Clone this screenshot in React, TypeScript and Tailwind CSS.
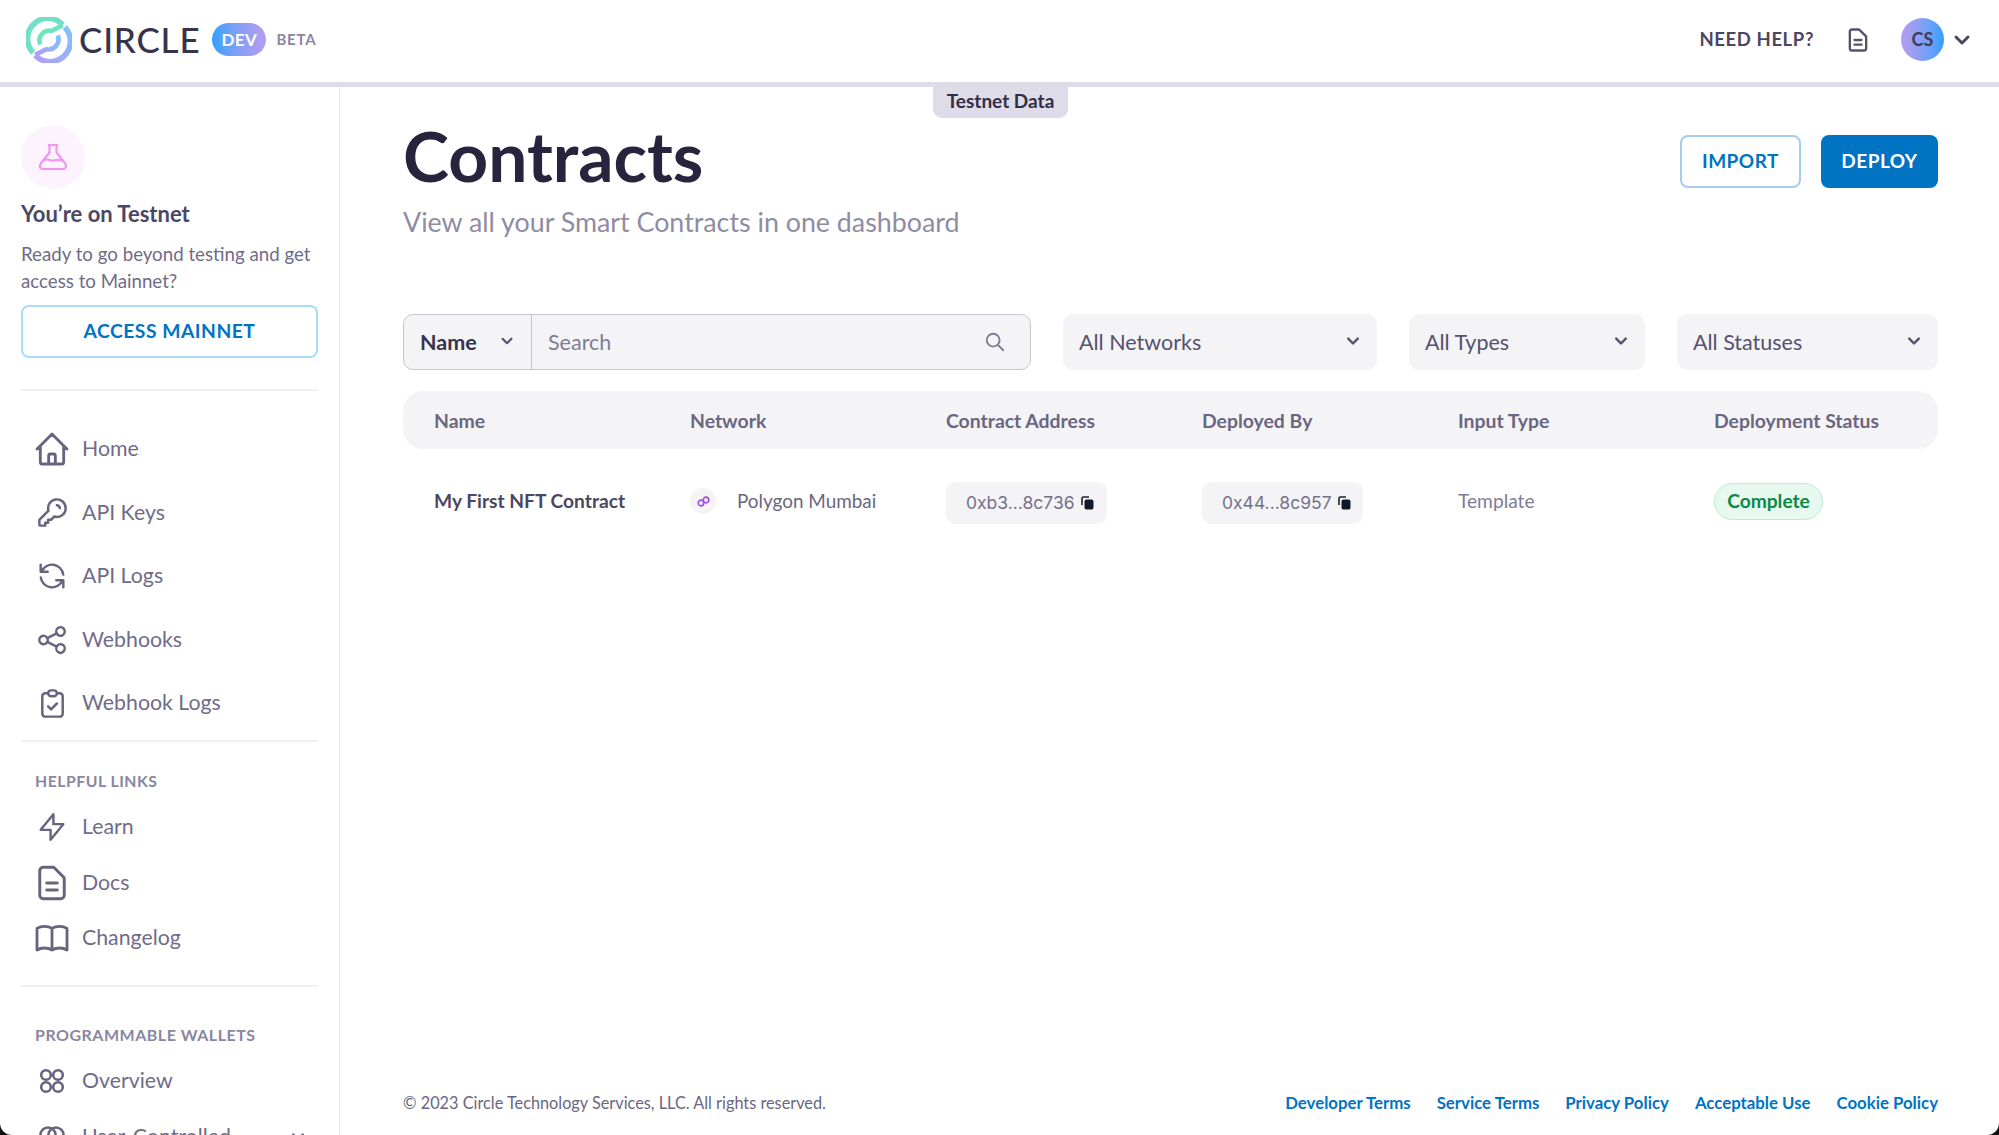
import React from "react";
import {
  HiOutlineHome, HiOutlineKey, HiOutlineRefresh, HiOutlineShare, HiOutlineClipboardCheck,
  HiOutlineLightningBolt, HiOutlineDocumentText, HiOutlineBookOpen, HiOutlineSearch, HiChevronDown,
} from "react-icons/hi";

function Logo() {
  return (
    <svg width="46" height="46" viewBox="0 0 45 45" fill="none" className="shrink-0">
      <defs>
        <linearGradient id="lg2" x1="1" y1="0" x2="0" y2="1">
          <stop offset="0" stopColor="#7cc4fb" />
          <stop offset="1" stopColor="#b49cf3" />
        </linearGradient>
      </defs>
      <path d="M7 35 A19.5 19.5 0 0 1 36 7.5" stroke="#72dfc9" strokeWidth="5.5" />
      <path d="M36 8 L25 13.5 A9.8 9.8 0 0 0 14 27" stroke="#6fe5bf" strokeWidth="4.500" />
      <path d="M38 10 A19.5 19.5 0 0 1 9 37.5" stroke="url(#lg2)" strokeWidth="5.5" />
      <path d="M9 37 L20 31.5 A9.8 9.8 0 0 0 31 18" stroke="url(#lg2)" strokeWidth="4.500" />
    </svg>
  );
}

function Flask() {
  return (
    <svg width="30" height="28" viewBox="0 0 30 28" fill="none" stroke="#f294f5" strokeWidth="2.2" strokeLinejoin="round">
      <path d="M10 2h10M11.5 2v7.5L2.5 21c-1.5 2.5 0 5 2.5 5h20c2.5 0 4-2.5 2.5-5L18.5 9.500V2" />
      <path d="M5 17.500c5-3 7 1 11 0 3-1 5-1 8 0" />
    </svg>
  );
}

function Circles() {
  return (
    <svg width="26" height="26" viewBox="0 0 26 26" fill="none" stroke="#68647f" strokeWidth="2.6">
      <circle cx="7" cy="7" r="4.800" /><circle cx="19" cy="7" r="4.800" />
      <circle cx="7" cy="19" r="4.800" /><circle cx="19" cy="19" r="4.800" />
    </svg>
  );
}

function Venn() {
  return (
    <svg width="26" height="26" viewBox="0 0 26 26" fill="none" stroke="#68647f" strokeWidth="2.6">
      <circle cx="9" cy="11" r="7.500" /><circle cx="17" cy="11" r="7.500" />
    </svg>
  );
}

function CopyIcon() {
  return (
    <svg width="13" height="14" viewBox="0 0 13 14" className="shrink-0">
      <path d="M1 9V2.500C1 1.500 1.700 1 2.500 1H8" fill="none" stroke="#1a2033" strokeWidth="1.600" />
      <rect x="3.500" y="3.500" width="9" height="10" rx="2" fill="#111827" />
    </svg>
  );
}

function NavItem({ icon, label, cls }: { icon: React.ReactNode; label: string; cls: string }) {
  return (
    <div className={`flex items-center ${cls}`}>
      <div className="w-[62px] flex justify-center text-[#68647f] shrink-0 [&_path]:[stroke-width:1.7]">{icon}</div>
      <span className="-ml-px text-[21.300px] text-[#6f6b88]">{label}</span>
    </div>
  );
}

function Dropdown({ label, cls }: { label: string; cls: string }) {
  return (
    <div className={`h-[56px] rounded-[10px] bg-[#f4f4f6] flex items-center justify-between pl-4 pr-[12px] ${cls}`}>
      <span className="text-[21.500px] text-[#55516e]">{label}</span>
      <HiChevronDown className="text-[#55516e] -mt-[2px]" size={24} />
    </div>
  );
}

const F = "font-['Lato','Liberation_Sans',sans-serif]";

export default function App() {
  return (
    <div className={`w-full h-[1135px] bg-[#111] overflow-hidden ${F}`}>
      <div className="h-full bg-white rounded-b-[12px] overflow-hidden flex flex-col">
        <header className="h-[87px] shrink-0 border-b-[5px] border-[#dedce8] flex items-center justify-between pl-[26px] pr-[20px] pb-[3px]">
          <div className="flex items-center">
            <Logo />
            <span className="ml-[7px] text-[35px] tracking-[0.800px] text-[#37334d] font-medium leading-none">CIRCLE</span>
            <span className="ml-[12px] w-[54px] h-[33px] rounded-full bg-gradient-to-r from-[#2ba0fd] to-[#b79cf0] text-white text-[17px] font-bold flex items-center justify-center tracking-[0.500px]">DEV</span>
            <span className="ml-[10px] text-[15px] font-bold text-[#8a86a0] tracking-[0.800px]">BETA</span>
          </div>
          <div className="flex items-center">
            <span className="text-[18.500px] font-bold text-[#4b4763] tracking-[0.600px]">NEED HELP?</span>
            <HiOutlineDocumentText size={28} className="ml-[30px] text-[#55516e]" />
            <div className="ml-[29px] w-[43px] h-[43px] rounded-full bg-gradient-to-r from-[#b79cf0] to-[#2ba0fd] flex items-center justify-center text-[18px] font-bold text-[#413d58]">CS</div>
            <HiChevronDown size={30} className="ml-[3px] mr-[2px] text-[#4b4763]" />
          </div>
        </header>
        <div className="flex flex-1 min-h-0">
          <aside className="w-[340px] shrink-0 border-r border-[#e8e8ec] pl-[21px] pr-[21px] pt-[38px] overflow-hidden">
            <div className="w-[64px] h-[64px] rounded-full bg-[#fdf3ff] flex items-center justify-center">
              <Flask />
            </div>
            <div className="mt-[12px] text-[22px] font-bold text-[#4b4763] leading-[26px]">You’re on Testnet</div>
            <div className="mt-[14px] text-[18.700px] leading-[26.500px] text-[#6f6b88]">Ready to go beyond testing and get<br />access to Mainnet?</div>
            <div className="mt-[11px] h-[53px] rounded-[8px] border-2 border-[#a9dbfb] flex items-center justify-center text-[19.300px] font-bold text-[#0073c3] tracking-[0.500px]">ACCESS MAINNET</div>
            <div className="mt-[31px] h-[2px] bg-[#f0f0f3]" />
            <div className="mt-[26px] flex flex-col">
              <NavItem cls="h-[64px]" icon={<HiOutlineHome size={40} />} label="Home" />
              <NavItem cls="h-[63px]" icon={<HiOutlineKey size={35} />} label="API Keys" />
              <NavItem cls="h-[64px]" icon={<HiOutlineRefresh size={34} />} label="API Logs" />
              <NavItem cls="h-[63px]" icon={<HiOutlineShare size={34} />} label="Webhooks" />
              <NavItem cls="h-[64px]" icon={<HiOutlineClipboardCheck size={35} />} label="Webhook Logs" />
            </div>
            <div className="mt-[5px] h-[2px] bg-[#f0f0f3]" />
            <div className="mt-[29px] pl-[14px] text-[15.800px] leading-[20px] font-bold text-[#8a86a0] tracking-[0.500px]">HELPFUL LINKS</div>
            <div className="mt-[8px] flex flex-col">
              <NavItem cls="h-[56px]" icon={<HiOutlineLightningBolt size={34} />} label="Learn" />
              <NavItem cls="h-[55px]" icon={<HiOutlineDocumentText size={42} />} label="Docs" />
              <NavItem cls="h-[56px]" icon={<HiOutlineBookOpen size={40} />} label="Changelog" />
            </div>
            <div className="mt-[19px] h-[2px] bg-[#f0f0f3]" />
            <div className="mt-[38px] pl-[14px] text-[16px] leading-[20px] font-bold text-[#8a86a0] tracking-[0.500px] whitespace-nowrap">PROGRAMMABLE WALLETS</div>
            <div className="mt-[8px] flex flex-col">
              <NavItem cls="h-[56px]" icon={<Circles />} label="Overview" />
              <div className="flex items-center h-[56px]">
                <div className="w-[62px] flex justify-center shrink-0"><Venn /></div>
                <span className="-ml-px text-[21.300px] text-[#6f6b88]">User-Controlled</span>
                <HiChevronDown size={24} className="ml-auto mr-[8px] text-[#68647f]" />
              </div>
            </div>
          </aside>
          <main className="flex-1 min-w-0 pl-[63px] pr-[61px] relative flex flex-col">
            <div className="absolute left-[593px] top-0 w-[135px] h-[31px] rounded-b-[9px] bg-[#dedce8] flex items-center justify-center text-[19px] font-bold text-[#322e47] pb-[2px]">Testnet Data</div>
            <div className="flex items-start justify-between pt-[30px]">
              <div>
                <h1 className="text-[69.500px] leading-[76px] font-bold text-[#29243d]">Contracts</h1>
                <p className="mt-[13px] text-[26.800px] leading-[32px] text-[#8f8ca3]">View all your Smart Contracts in one dashboard</p>
              </div>
              <div className="flex gap-[20px] mt-[18px]">
                <div className="w-[121px] h-[53px] rounded-[8px] border-2 border-[#a6cdee] flex items-center justify-center text-[19px] font-bold text-[#0073c3] tracking-[0.500px]">IMPORT</div>
                <div className="w-[117px] h-[53px] rounded-[8px] bg-[#0073c3] flex items-center justify-center text-[19px] font-bold text-white tracking-[0.500px]">DEPLOY</div>
              </div>
            </div>
            <div className="mt-[76px] flex items-center">
              <div className="w-[628px] h-[56px] rounded-[10px] border border-[#c6c6cc] bg-[#f4f4f6] flex items-stretch">
                <div className="w-[128px] border-r border-[#c6c6cc] flex items-center justify-between pl-4 pr-[13px]">
                  <span className="text-[21.500px] font-bold text-[#37334d]">Name</span>
                  <HiChevronDown size={22} className="text-[#55516e] -mt-[2px]" />
                </div>
                <div className="flex-1 flex items-center justify-between pl-4 pr-[24px]">
                  <span className="text-[21.500px] text-[#7f7b96]">Search</span>
                  <HiOutlineSearch size={22} className="text-[#7f7b96]" />
                </div>
              </div>
              <Dropdown label="All Networks" cls="ml-[32px] w-[314px]" />
              <Dropdown label="All Types" cls="ml-[32px] w-[236px]" />
              <Dropdown label="All Statuses" cls="ml-[32px] w-[261px]" />
            </div>
            <div className="mt-[21px] h-[58px] pt-[1px] rounded-[20px] bg-[#f4f4f6] px-[31px] grid grid-cols-[256px_256px_256px_256px_256px_1fr] items-center text-[19.400px] font-bold text-[#6a6682]">
              <span>Name</span><span>Network</span><span>Contract Address</span><span>Deployed By</span><span>Input Type</span><span>Deployment Status</span>
            </div>
            <div className="mt-[30px] px-[31px] grid grid-cols-[256px_256px_256px_256px_256px_1fr] items-center text-[19.200px]">
              <span className="font-bold text-[#4b4763]">My First NFT Contract</span>
              <div className="flex items-center text-[#6a6682]">
                <div className="w-[26px] h-[26px] rounded-full bg-[#f4f4f6] flex items-center justify-center">
                  <svg width="13" height="11" viewBox="0 0 13 11" fill="none" stroke="#a74de8" strokeWidth="1.700">
                    <circle cx="4" cy="7" r="2.800" /><circle cx="9" cy="4" r="2.800" />
                  </svg>
                </div>
                <span className="ml-[21px] text-[18.900px]">Polygon Mumbai</span>
              </div>
              <div className="w-[161px] h-[42px] rounded-[9px] bg-[#f4f4f6] flex items-center pl-[20px] gap-[6px] text-[#75718c] mt-[3px]">
                <span className="font-['Inter',sans-serif] text-[17.500px]">0xb3...8c736</span><CopyIcon />
              </div>
              <div className="w-[161px] h-[42px] rounded-[9px] bg-[#f4f4f6] flex items-center pl-[20px] gap-[6px] text-[#75718c] mt-[3px]">
                <span className="font-['Inter',sans-serif] text-[17.500px]">0x44...8c957</span><CopyIcon />
              </div>
              <span className="text-[#7f7b96]">Template</span>
              <div className="w-[109px] h-[37px] rounded-full bg-[#e7f8ee] border border-[#b8ecd0] flex items-center justify-center text-[#0a8a45] font-bold">Complete</div>
            </div>
            <footer className="mt-auto mb-[22px] flex items-center justify-between leading-[20px]">
              <span className="text-[16.300px] text-[#6a6682]">© 2023 Circle Technology Services, LLC. All rights reserved.</span>
              <div className="flex gap-[26px] text-[16.800px] font-bold text-[#0073c3]">
                <span>Developer Terms</span><span>Service Terms</span><span>Privacy Policy</span><span>Acceptable Use</span><span>Cookie Policy</span>
              </div>
            </footer>
          </main>
        </div>
      </div>
    </div>
  );
}
